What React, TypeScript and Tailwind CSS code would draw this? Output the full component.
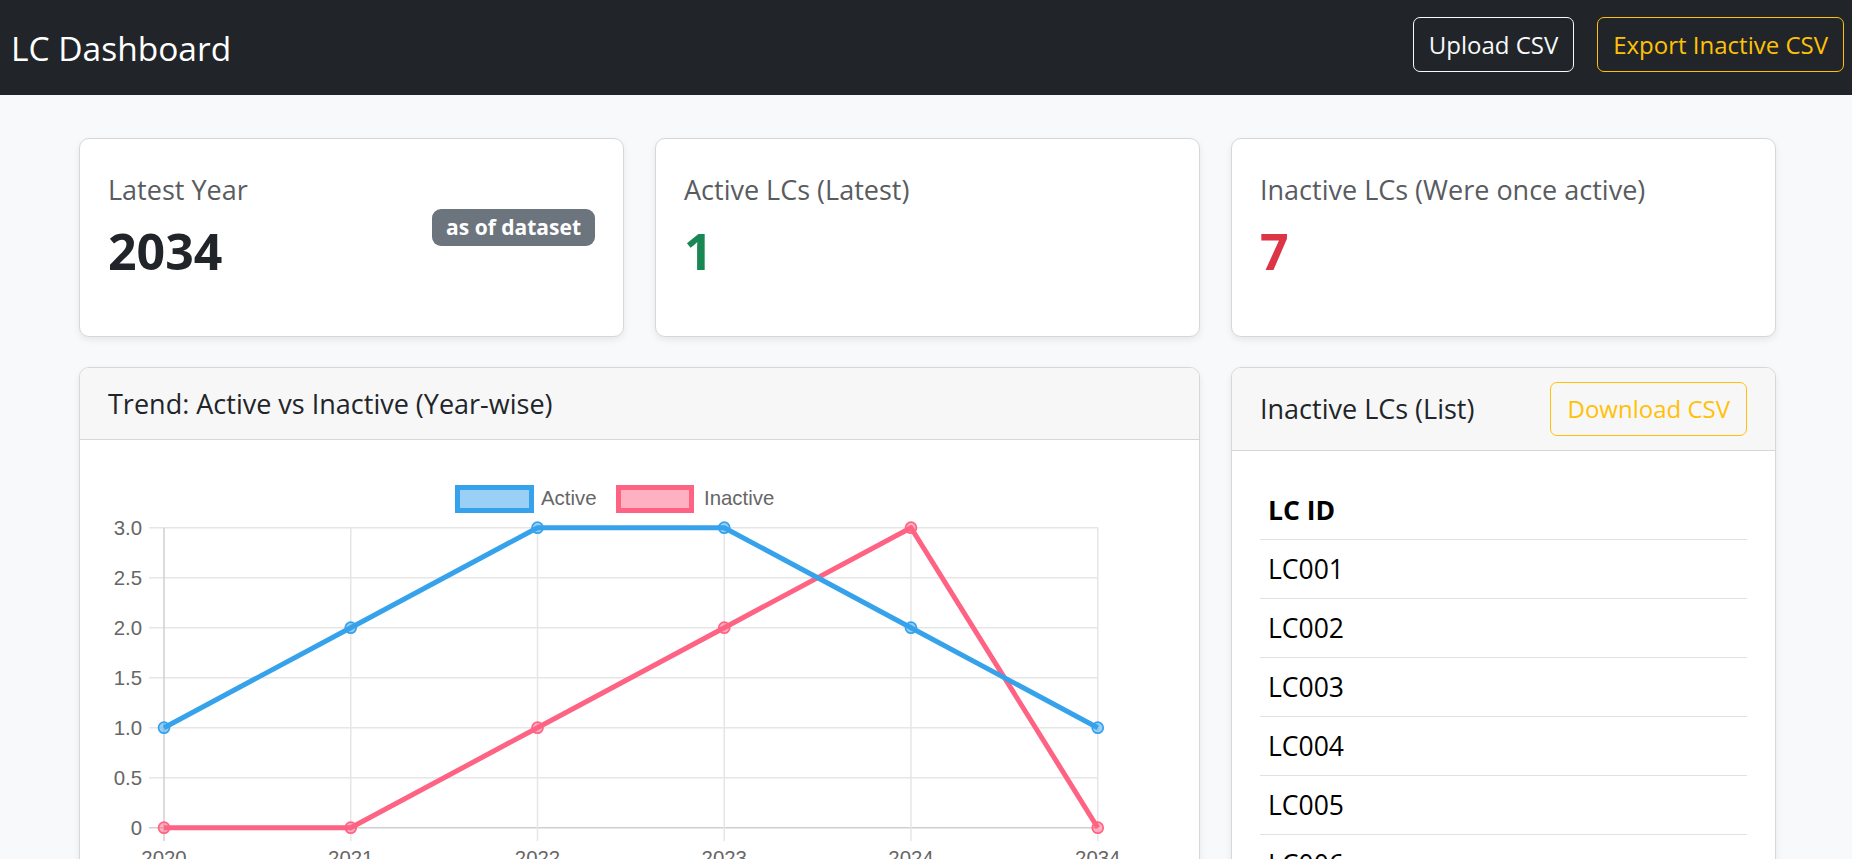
import React from "react";

const xs = [84, 270.75, 457.5, 644.25, 831, 1017.75];
const years = ["2020", "2021", "2022", "2023", "2024", "2034"];
const active = [1, 2, 3, 3, 2, 1];
const inactive = [0, 0, 1, 2, 3, 0];
const yOf = (v: number) => 387.7 - 100 * v;
const yTicks = [3, 2.5, 2, 1.5, 1, 0.5, 0];

function TrendChart() {
  const path = (data: number[]) =>
    data.map((v, i) => `${i === 0 ? "M" : "L"}${xs[i]},${yOf(v)}`).join(" ");
  return (
    <svg width="1119" height="440" className="block" style={{ fontFamily: "'Liberation Sans', Arial, sans-serif" }}>
      {yTicks.map((t) => (
        <g key={t}>
          <line x1={69} x2={1018} y1={yOf(t)} y2={yOf(t)} stroke={t === 0 ? "#cfcfcf" : "#e6e6e6"} strokeWidth={1.5} />
          <text x={62} y={yOf(t) + 7.3} textAnchor="end" fontSize="20.4" fill="#666">
            {t === 0 ? "0" : t.toFixed(1)}
          </text>
        </g>
      ))}
      {xs.map((x, i) => (
        <g key={i}>
          <line x1={x} x2={x} y1={87.7} y2={401} stroke={i === 0 ? "#cfcfcf" : "#e6e6e6"} strokeWidth={1.5} />
          <text x={x} y={424.6} textAnchor="middle" fontSize="20.4" fill="#666">
            {years[i]}
          </text>
        </g>
      ))}
      <rect x={377.5} y={47.5} width={74} height={23} fill="rgba(54,162,235,0.5)" stroke="#36a2eb" strokeWidth={5} />
      <text x={461} y={65} fontSize="20.4" fill="#666">Active</text>
      <rect x={538.5} y={47.5} width={73} height={23} fill="rgba(255,99,132,0.5)" stroke="#ff6384" strokeWidth={5} />
      <text x={624} y={65} fontSize="20.4" fill="#666">Inactive</text>

      <path d={path(inactive)} fill="none" stroke="#ff6384" strokeWidth={5} strokeLinejoin="round" />
      {inactive.map((v, i) => (
        <circle key={i} cx={xs[i]} cy={yOf(v)} r={5.5} fill="rgba(255,99,132,0.5)" stroke="#ff6384" strokeWidth={1.7} />
      ))}
      <path d={path(active)} fill="none" stroke="#36a2eb" strokeWidth={5} strokeLinejoin="round" />
      {active.map((v, i) => (
        <circle key={i} cx={xs[i]} cy={yOf(v)} r={5.5} fill="rgba(54,162,235,0.5)" stroke="#36a2eb" strokeWidth={1.7} />
      ))}
    </svg>
  );
}

function StatCard({ title, value, color, badge }: { title: string; value: string; color: string; badge?: boolean }) {
  return (
    <div className="h-[199px] bg-white border border-[#d6d7d8] rounded-[10px] shadow-[0_3px_7px_rgba(0,0,0,0.075)] px-[28px] pt-[31px] flex items-start justify-between">
      <div className="flex flex-col">
        <div className="text-[27px] leading-[40px] text-[#595c5f]">{title}</div>
        <div className={`mt-[11px] text-[50px] leading-[60px] font-bold ${color}`}>{value}</div>
      </div>
      {badge && (
        <span className="mt-[39px] bg-[#6c757d] text-white font-bold text-[21px] leading-[21px] px-[14px] py-[8px] rounded-[9px]">
          as of dataset
        </span>
      )}
    </div>
  );
}

export default function App() {
  const rows = ["LC001", "LC002", "LC003", "LC004", "LC005", "LC006", "LC007"];
  return (
    <div className="min-h-screen bg-[#f8f9fa] font-['Open_Sans',sans-serif] text-[#212529]">
      <nav className="h-[95px] bg-[#212529] flex items-center justify-between pl-[11px] pr-[8px]">
        <span className="text-white text-[33.5px] leading-[40px]">LC Dashboard</span>
        <div className="flex gap-[23px] -mt-[6px]">
          <button className="h-[55px] px-[15px] border border-[#f8f9fa] text-[#f8f9fa] rounded-[7px] text-[24px] leading-[30px]">
            Upload CSV
          </button>
          <button className="h-[55px] px-[15px] border border-[#ffc107] text-[#ffc107] rounded-[7px] text-[24px] leading-[30px]">
            Export Inactive CSV
          </button>
        </div>
      </nav>

      <main className="pl-[79px] w-[1776px] pt-[43px] pb-[40px]">
        <div className="grid grid-cols-3 gap-[31px]">
          <StatCard title="Latest Year" value="2034" color="text-[#212529]" badge />
          <StatCard title="Active LCs (Latest)" value="1" color="text-[#198754]" />
          <StatCard title="Inactive LCs (Were once active)" value="7" color="text-[#dc3545]" />
        </div>

        <div className="mt-[30px] grid grid-cols-[1121px_545px] gap-[31px] items-start">
          <div className="bg-white border border-[#d6d7d8] rounded-[10px] shadow-[0_3px_7px_rgba(0,0,0,0.075)] overflow-hidden">
            <div className="h-[72px] bg-[#f7f7f7] border-b border-[#d6d7d8] px-[28px] flex items-center">
              <span className="text-[27px] leading-[40px]">Trend: Active vs Inactive (Year-wise)</span>
            </div>
            <div className="pb-[20px]">
              <TrendChart />
            </div>
          </div>

          <div className="bg-white border border-[#d6d7d8] rounded-[10px] shadow-[0_3px_7px_rgba(0,0,0,0.075)] overflow-hidden">
            <div className="h-[83px] bg-[#f7f7f7] border-b border-[#d6d7d8] px-[28px] flex items-center justify-between">
              <span className="text-[27px] leading-[40px]">Inactive LCs (List)</span>
              <button className="h-[54px] px-[16px] border border-[#ffc107] text-[#ffc107] rounded-[7px] text-[24px] leading-[30px]">
                Download CSV
              </button>
            </div>
            <div className="px-[28px] pt-[30px] pb-[28px]">
              <table className="w-full text-[26.5px] text-[#000]">
                <thead>
                  <tr className="border-b border-[#dee2e6]">
                    <th className="text-left font-bold px-[8px] py-[9px] leading-[40px]">LC ID</th>
                  </tr>
                </thead>
                <tbody>
                  {rows.map((r) => (
                    <tr key={r} className="border-b border-[#dee2e6]">
                      <td className="px-[8px] py-[9px] leading-[40px]">{r}</td>
                    </tr>
                  ))}
                </tbody>
              </table>
            </div>
          </div>
        </div>
      </main>
    </div>
  );
}
